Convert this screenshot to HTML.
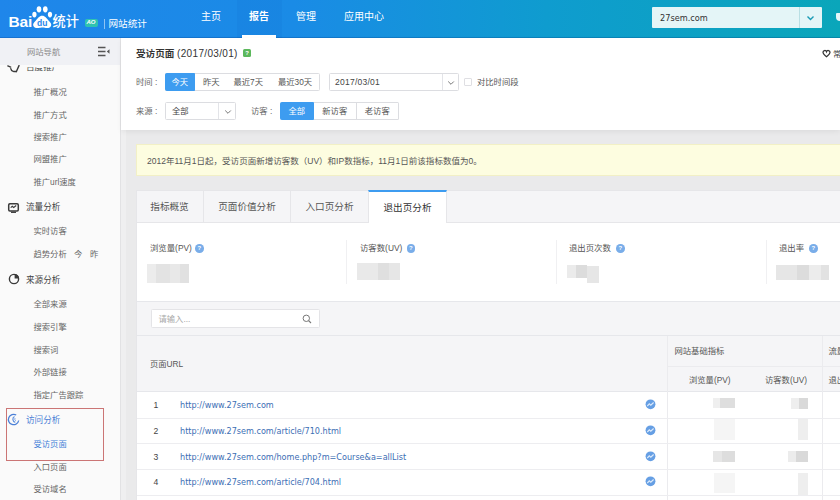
<!DOCTYPE html>
<html lang="zh-CN">
<head>
<meta charset="utf-8">
<title>百度统计 - 受访页面</title>
<style>
*{box-sizing:border-box;margin:0;padding:0}
html,body{width:840px;height:500px;overflow:hidden}
body{position:relative;background:#eaeaeb;font-family:"Liberation Sans","Noto Sans CJK SC",sans-serif;font-size:8.3px;color:#555;line-height:1}
.abs{position:absolute}
.t{position:absolute;white-space:nowrap;transform:translateY(-50%)}
/* header */
#hd{position:absolute;left:0;top:0;width:840px;height:38px;background:linear-gradient(90deg,#1f86ea 0%,#1a8be6 35%,#0f9ccf 65%,#0aa6ba 100%);border-bottom:1px solid rgba(0,40,120,.22)}
#hd .nav{position:absolute;top:17px;transform:translateY(-50%);color:#fff;font-size:10px;white-space:nowrap}
#hd .act{position:absolute;left:237px;top:0;width:45px;height:38px;background:rgba(0,60,160,.05)}
#hd .ul{position:absolute;left:242px;top:35px;width:34px;height:3px;background:#fff}
#site{position:absolute;left:652px;top:7px;width:170px;height:21px;background:#e4f5f7;border-radius:1px}
#site .dv{position:absolute;left:147px;top:0;width:1px;height:21px;background:#b9dfe4}
/* sidebar */
#sb{position:absolute;left:0;top:38px;width:121px;height:462px;background:#fafafa;border-right:1px solid #e2e2e4}
#sbh{position:absolute;left:0;top:0;width:120px;height:27px;background:#f0f1f5}
#sb .it{position:absolute;left:33.5px;transform:translateY(-50%);white-space:nowrap;color:#666;font-size:8.3px}
#sb .sec{position:absolute;left:26px;transform:translateY(-50%);white-space:nowrap;color:#444;font-size:8.6px}
/* top panel */
#strip{position:absolute;left:121px;top:130px;width:5px;height:370px;background:#efeff0}
#tp{position:absolute;left:121px;top:38px;width:719px;height:92px;background:#fff;box-shadow:0 2px 5px rgba(0,0,0,.055)}
.btn{position:absolute;border:1px solid #dcdde1;background:#fff;text-align:center;color:#555}
.on{background:#3d9cf0;border-color:#3d9cf0;color:#fff}
/* notice */
#nt{position:absolute;left:136px;top:144px;width:710px;height:32px;background:#fdfde0;border:1px solid #f2f0c6}
/* card */
#card{position:absolute;left:136px;top:190px;width:710px;height:320px;background:#fff;border-left:1px solid #e6e6e9}
#tabs{position:absolute;left:0;top:0;width:710px;height:33px;background:#f5f5f7;border-top:1px solid #e6e6e9;border-bottom:1px solid #e6e6e9}
.tab{position:absolute;top:0;height:32px;border-right:1px solid #e6e6e9;text-align:center;line-height:31px;font-size:9.6px;color:#555}
.tab.cur{background:#fff;border-top:2px solid #3d9cf0;height:33px;top:-1px;color:#333;border-left:1px solid #e6e6e9;line-height:32px}
.q{width:8.500px;height:8.500px;border-radius:50%;background:#79ade9;color:#fff;font-size:6px;font-weight:bold;text-align:center;line-height:8.500px}
.blur{filter:blur(.7px)}
.url{color:#3c6eb4;font-size:8.1px;font-family:"DejaVu Sans","Liberation Sans",sans-serif}
</style>
</head>
<body>
<div id="hd">
  <div class="act"></div><div class="ul"></div>
  <div class="nav" style="left:8.500px;font-size:15.500px;font-weight:bold;letter-spacing:-.2px;top:21.600px">Bai</div>
  <div class="nav" style="left:52.500px;font-size:13.200px;font-weight:500;top:22.300px">统计</div>
  <svg class="abs" style="left:30px;top:4px" width="24" height="26" viewBox="0 0 24 26"><g fill="#fff"><ellipse cx="9" cy="5.300" rx="2.300" ry="3.100"/><ellipse cx="15.300" cy="5.300" rx="2.300" ry="3.100"/><ellipse cx="4.400" cy="10.600" rx="2.100" ry="2.800"/><ellipse cx="20" cy="10.600" rx="2.100" ry="2.800"/><path d="M12.200 11.800c3 0 4.200 2.600 6.300 4.600 2.200 2 3.200 3.400 2.600 5.400-.7 2.200-2.900 2.500-5.300 2.200-1.600-.2-2.600-.4-3.600-.4s-2 .2-3.600.4c-2.400.3-4.600 0-5.300-2.200-.6-2 .4-3.400 2.600-5.400 2.100-2 3.300-4.600 6.300-4.600z"/></g><text x="12.200" y="22.300" font-size="8.500" font-weight="bold" fill="#1f86ea" text-anchor="middle" font-family="Liberation Sans,sans-serif">du</text></svg>
  <div class="abs" style="left:84.500px;top:19.300px;width:13px;height:7.800px;background:#2fc3b0;border-radius:2px;color:#fff;font-size:6px;font-weight:bold;font-style:italic;text-align:center;line-height:7.800px">AO</div>
  <div class="abs" style="left:104px;top:19px;width:1px;height:9.500px;background:rgba(255,255,255,.5)"></div>
  <div class="nav" style="left:108.500px;font-size:9.600px;top:24px">网站统计</div>
  <div class="nav" style="left:201px">主页</div>
  <div class="nav" style="left:249px;font-weight:bold">报告</div>
  <div class="nav" style="left:296px">管理</div>
  <div class="nav" style="left:344px">应用中心</div>
  <div id="site"><div class="dv"></div><div class="t" style="left:8px;top:10.500px;font-size:8.200px;color:#333;font-family:'DejaVu Sans','Liberation Sans',sans-serif">27sem.com</div>
    <svg class="abs" style="left:154px;top:7.500px" width="9" height="6" viewBox="0 0 9 6"><path d="M1.500 1.500L4.500 4.500L7.500 1.500" fill="none" stroke="#1a9bb5" stroke-width="1.400"/></svg>
  </div>
  <div class="abs" style="left:835.500px;top:13px;width:6px;height:8px;background:#e4f6f8;border-radius:1px 0 0 4px"></div>
</div>

<div id="sb">
  <div id="sbh"><div class="t" style="left:27px;top:13.500px;color:#888;font-size:8.3px">网站导航</div>
    <svg class="abs" style="left:97px;top:8px" width="14" height="11" viewBox="0 0 14 11"><g stroke="#555" stroke-width="1.300"><path d="M1 1.500H8.500M1 5.500H8.500M1 9.500H8.500"/></g><path d="M12.500 3.200V7.800L9.800 5.500z" fill="#555"/></svg>
  </div>
  <div class="sec" style="top:29px;clip-path:inset(4.5px 0 0 0)">百度推广</div>
  <div class="it" style="top:54px">推广概况</div>
  <div class="it" style="top:76.5px">推广方式</div>
  <div class="it" style="top:98.5px">搜索推广</div>
  <div class="it" style="top:121px">网盟推广</div>
  <div class="it" style="top:144px">推广url速度</div>
  <div class="it" style="top:193px">实时访客</div>
  <div class="it" style="top:216px">趋势分析</div>
  <div class="it" style="top:266px">全部来源</div>
  <div class="it" style="top:289px">搜索引擎</div>
  <div class="it" style="top:311.5px">搜索词</div>
  <div class="it" style="top:334px">外部链接</div>
  <div class="it" style="top:356.5px">指定广告跟踪</div>
  <div class="it" style="top:428.5px">入口页面</div>
  <div class="it" style="top:451px">受访域名</div>
  <div class="it" style="left:74px;top:216px">今</div><div class="it" style="left:90px;top:216px">昨</div>
  <div class="sec" style="top:168.5px">流量分析</div>
  <div class="sec" style="top:241.5px">来源分析</div>
  <div class="sec" style="top:381.5px;color:#4a7fd6">访问分析</div>
  <div class="it" style="top:406px;color:#3f7fd8">受访页面</div>
  <div class="abs" style="left:6px;top:370px;width:98px;height:53px;border:1px solid #cb7575"></div>
  <svg class="abs" style="left:7px;top:27px" width="14" height="8" viewBox="0 0 14 8"><path d="M.8 .9L3.700 2.100M3.800 3.600C4.300 6.700 7.800 7 9.700 6M12 .6L9.300 6.800" fill="none" stroke="#3a3a3a" stroke-width="1.400" stroke-linecap="round"/></svg>
  <svg class="abs" style="left:7px;top:163.500px" width="13" height="12" viewBox="0 0 13 12"><rect x="1.700" y="1.700" width="9.600" height="7.200" rx="1.200" fill="none" stroke="#3a3a3a" stroke-width="1.500"/><path d="M3.700 5.600L5.300 4.300L6.700 5.500L9.200 3.500" fill="none" stroke="#3a3a3a" stroke-width="1.100"/><path d="M4 10.300H9" stroke="#3a3a3a" stroke-width="1.300"/></svg>
  <svg class="abs" style="left:7.700px;top:273.300px;top:235.300px" width="12" height="12" viewBox="0 0 12 12"><circle cx="6" cy="6" r="4.600" fill="none" stroke="#3a3a3a" stroke-width="1.400"/><path d="M6.600 1A4.600 4.600 0 0 1 11 5.400H6.600z" fill="#3a3a3a"/></svg>
  <svg class="abs" style="left:7px;top:375px" width="13" height="13" viewBox="0 0 13 13"><path d="M9.200 2A5.200 5.200 0 1 0 11.700 7.500" fill="none" stroke="#4a7fd6" stroke-width="1.300"/><path d="M7.500 3.400A3.200 3.200 0 0 0 8.300 9.300" fill="none" stroke="#5f90de" stroke-width="1.200"/><path d="M8.300 5A1.600 1.600 0 0 0 8.800 7.700" fill="none" stroke="#7aa3e4" stroke-width="1"/></svg>
</div>

<div id="strip"></div>
<div id="tp">
  <div class="t" style="left:15px;top:15.5px;font-size:9.6px;color:#333"><b>受访页面</b> <span style="font-size:10px;letter-spacing:.33px">(2017/03/01)</span></div>
  <div class="abs" style="left:122px;top:11px;width:8px;height:8px;background:#5cb85c;border-radius:1.500px;color:#fff;font-size:6px;font-weight:bold;text-align:center;line-height:8px">?</div>
  <div class="t" style="left:15px;top:44px;color:#666">时间<span style="margin-left:2.500px">:</span></div>
  <div class="t" style="left:15px;top:73px;color:#666">来源<span style="margin-left:2.500px">:</span></div>
  <div class="t" style="left:130px;top:73px;color:#666">访客<span style="margin-left:2.500px">:</span></div>
  <div class="btn" style="left:43.5px;top:34.5px;width:155.5px;height:18.500px;border-radius:1.500px"></div>
  <div class="btn on" style="left:43.5px;top:34.5px;width:30.5px;height:18.500px;line-height:16.500px;border-radius:1.500px 0 0 1.500px">今天</div>
  <div class="t" style="left:82px;top:44px">昨天</div>
  <div class="t" style="left:112.5px;top:44px">最近7天</div>
  <div class="t" style="left:157px;top:44px">最近30天</div>
  <div class="btn" style="left:207.5px;top:34.5px;width:130.5px;height:18px;border-radius:1.500px"></div>
  <div class="abs" style="left:321px;top:35.5px;width:1px;height:16px;background:#e3e4e8"></div>
  <div class="t" style="left:214px;top:44px;color:#444;font-size:8.500px;letter-spacing:.25px">2017/03/01</div>
  <svg class="abs" style="left:325.5px;top:41.5px" width="8" height="6" viewBox="0 0 8 6"><path d="M1.200 1.500L4 4.300L6.800 1.500" fill="none" stroke="#777" stroke-width="1"/></svg>
  <div class="abs" style="left:343px;top:40px;width:7.500px;height:7.500px;border:1px solid #dfdfe3;border-radius:1px;background:#fff"></div>
  <div class="t" style="left:356px;top:44px;color:#555">对比时间段</div>
  <div class="btn" style="left:43.5px;top:63.5px;width:71.5px;height:18.500px;border-radius:1.500px"></div>
  <div class="abs" style="left:97px;top:64.5px;width:1px;height:16.500px;background:#e3e4e8"></div>
  <div class="t" style="left:51px;top:73px;color:#444">全部</div>
  <svg class="abs" style="left:102.5px;top:70.5px" width="8" height="6" viewBox="0 0 8 6"><path d="M1.200 1.500L4 4.300L6.800 1.500" fill="none" stroke="#777" stroke-width="1"/></svg>
  <div class="btn on" style="left:158.5px;top:64px;width:34.5px;height:18px;line-height:16px;border-radius:1.500px 0 0 1.500px">全部</div>
  <div class="btn" style="left:193px;top:64px;width:42.5px;height:18px;line-height:16px;border-left:0">新访客</div>
  <div class="btn" style="left:235.5px;top:64px;width:42.5px;height:18px;line-height:16px;border-left:0;border-radius:0 1.500px 1.500px 0">老访客</div>
  <svg class="abs" style="left:700.5px;top:10.5px" width="9" height="9" viewBox="0 0 9 9"><path d="M4.500 7.800C2.500 6.200 1 5 1 3.300A1.800 1.800 0 0 1 4.500 2.700A1.800 1.800 0 0 1 8 3.300C8 5 6.500 6.200 4.500 7.800z" fill="none" stroke="#333" stroke-width="1.250"/></svg>
  <div class="t" style="left:712px;top:15.5px;color:#444">常用</div>
</div>
<div id="nt"><div class="t" style="left:10px;top:15.500px;color:#555;font-size:8.520px">2012年11月1日起，受访页面新增访客数（UV）和IP数指标，11月1日前该指标数值为0。</div></div>
<div id="card"><div id="tabs"><div class="tab" style="left:-1px;width:68px">指标概览</div><div class="tab" style="left:67px;width:87px">页面价值分析</div><div class="tab" style="left:154px;width:78px">入口页分析</div><div class="tab cur" style="left:231px;width:79px">退出页分析</div></div>
  <div class="t" style="left:13px;top:58px;color:#555;font-size:8.4px">浏览量(PV)</div>
  <div class="abs q" style="left:58px;top:54px">?</div>
  <div class="t" style="left:223px;top:58px;color:#555;font-size:8.4px">访客数(UV)</div>
  <div class="abs q" style="left:269.500px;top:54px">?</div>
  <div class="t" style="left:432px;top:58px;color:#555;font-size:8.4px">退出页次数</div>
  <div class="abs q" style="left:479px;top:54px">?</div>
  <div class="t" style="left:642px;top:58px;color:#555;font-size:8.4px">退出率</div>
  <div class="abs q" style="left:672px;top:54px">?</div>
  <div class="abs" style="left:209px;top:50px;width:1px;height:44px;background:#f0f0f2"></div>
  <div class="abs" style="left:419px;top:50px;width:1px;height:44px;background:#f0f0f2"></div>
  <div class="abs" style="left:629px;top:50px;width:1px;height:44px;background:#f0f0f2"></div>
  <div class="abs" style="left:0;top:110.5px;width:710px;height:35px;background:#f5f5f7;border-top:1px solid #e6e7eb;border-bottom:1px solid #e6e7eb"></div>
  <div class="btn" style="left:14px;top:119px;width:169px;height:19px;border-radius:1.500px;border-color:#e4e4e7"></div>
  <div class="t" style="left:21.5px;top:128.5px;color:#aaa">请输入...</div>
  <svg class="abs" style="left:165px;top:124px" width="10" height="10" viewBox="0 0 10 10"><circle cx="4.300" cy="4.300" r="3.200" fill="none" stroke="#777" stroke-width="1"/><path d="M6.600 6.600L9 9" stroke="#777" stroke-width="1.100"/></svg>
  <div class="abs" style="left:0;top:145.5px;width:710px;height:56px;background:#f5f5f7;border-bottom:1px solid #e6e7eb"></div>
  <div class="t" style="left:13px;top:173.5px;color:#555">页面URL</div>
  <div class="abs" style="left:529.5px;top:145.5px;width:1px;height:180px;background:#ebebee"></div>
  <div class="abs" style="left:685px;top:145.5px;width:1px;height:180px;background:#ebebee"></div>
  <div class="abs" style="left:530px;top:176px;width:200px;height:1px;background:#ebebee"></div>
  <div class="t" style="left:537.5px;top:160.5px;color:#555">网站基础指标</div>
  <div class="t" style="left:552px;top:190px;color:#555">浏览量(PV)</div>
  <div class="t" style="left:628px;top:190px;color:#555">访客数(UV)</div>
  <div class="t" style="left:691.5px;top:160.5px;color:#555">流量质量指标</div>
  <div class="t" style="left:691.5px;top:190px;color:#555">退出页次数</div>
  <div class="abs" style="left:0;top:227.5px;width:710px;height:1px;background:#ededf0"></div>
  <div class="t" style="left:16.5px;top:215px;color:#444;font-size:8.6px">1</div>
  <div class="t url" style="left:43px;top:215px">http://www.27sem.com</div>
  <svg class="abs" style="left:508px;top:209px" width="11" height="11" viewBox="0 0 11 11"><circle cx="5.500" cy="5.300" r="4.900" fill="#669fe4"/><path d="M2.300 7L4.300 4.800L5.800 6.200L8.600 3.500" fill="none" stroke="#dbe9fa" stroke-width="1.200"/></svg>
  <div class="abs" style="left:0;top:253.3px;width:710px;height:1px;background:#ededf0"></div>
  <div class="t" style="left:16.5px;top:240.8px;color:#444;font-size:8.6px">2</div>
  <div class="t url" style="left:43px;top:240.8px">http://www.27sem.com/article/710.html</div>
  <svg class="abs" style="left:508px;top:234.8px" width="11" height="11" viewBox="0 0 11 11"><circle cx="5.500" cy="5.300" r="4.900" fill="#669fe4"/><path d="M2.300 7L4.300 4.800L5.800 6.200L8.600 3.500" fill="none" stroke="#dbe9fa" stroke-width="1.200"/></svg>
  <div class="abs" style="left:0;top:279.1px;width:710px;height:1px;background:#ededf0"></div>
  <div class="t" style="left:16.5px;top:266.6px;color:#444;font-size:8.6px">3</div>
  <div class="t url" style="left:43px;top:266.6px">http://www.27sem.com/home.php?m=Course&amp;a=allList</div>
  <svg class="abs" style="left:508px;top:260.6px" width="11" height="11" viewBox="0 0 11 11"><circle cx="5.500" cy="5.300" r="4.900" fill="#669fe4"/><path d="M2.300 7L4.300 4.800L5.800 6.200L8.600 3.500" fill="none" stroke="#dbe9fa" stroke-width="1.200"/></svg>
  <div class="abs" style="left:0;top:304.9px;width:710px;height:1px;background:#ededf0"></div>
  <div class="t" style="left:16.5px;top:292.4px;color:#444;font-size:8.6px">4</div>
  <div class="t url" style="left:43px;top:292.4px">http://www.27sem.com/article/704.html</div>
  <svg class="abs" style="left:508px;top:286.4px" width="11" height="11" viewBox="0 0 11 11"><circle cx="5.500" cy="5.300" r="4.900" fill="#669fe4"/><path d="M2.300 7L4.300 4.800L5.800 6.200L8.600 3.500" fill="none" stroke="#dbe9fa" stroke-width="1.200"/></svg>
  <div class="abs blur" style="left:10px;top:73.5px;width:42px;height:19.5px;background:linear-gradient(90deg,#ececec 0 22%,#e3e3e3 22% 55%,#e8e8e8 55% 78%,#e1e1e1 78%)"></div>
  <div class="abs blur" style="left:220px;top:73px;width:42.5px;height:17px;background:linear-gradient(90deg,#e9e9e9 0 50%,#dfdfdf 50% 75%,#e6e6e6 75%)"></div>
  <div class="abs blur" style="left:430px;top:74.5px;width:20px;height:13.5px;background:linear-gradient(90deg,#ebebeb 0 45%,#dcdcdc 45%)"></div>
  <div class="abs blur" style="left:450px;top:75.5px;width:11.5px;height:17px;background:#e6e6e6"></div>
  <div class="abs blur" style="left:639px;top:75px;width:53px;height:15px;background:linear-gradient(90deg,#e6e6e6 0 40%,#dcdcdc 40% 62%,#ececec 62% 85%,#e2e2e2 85%)"></div>
  <div class="abs blur" style="left:576px;top:207.5px;width:22px;height:10.5px;background:linear-gradient(90deg,#efefef 0 30%,#dedede 30%)"></div>
  <div class="abs blur" style="left:654px;top:208px;width:17px;height:10.5px;background:linear-gradient(90deg,#eeeeee 0 45%,#d9d9d9 45%)"></div>
  <div class="abs blur" style="left:577px;top:229px;width:21px;height:21px;background:#f5f5f5"></div>
  <div class="abs blur" style="left:661px;top:229px;width:10px;height:21px;background:#eeeeee"></div>
  <div class="abs blur" style="left:576px;top:260.5px;width:22px;height:11.5px;background:linear-gradient(90deg,#e6e6e6 0 40%,#dddddd 40%)"></div>
  <div class="abs blur" style="left:651px;top:260.5px;width:20px;height:11.5px;background:linear-gradient(90deg,#ececec 0 40%,#d9d9d9 40%)"></div>
  <div class="abs blur" style="left:577px;top:283px;width:21px;height:20px;background:#f5f5f5"></div>
  <div class="abs blur" style="left:661px;top:283px;width:10px;height:22px;background:#eeeeee"></div>
</div>
</body>
</html>
